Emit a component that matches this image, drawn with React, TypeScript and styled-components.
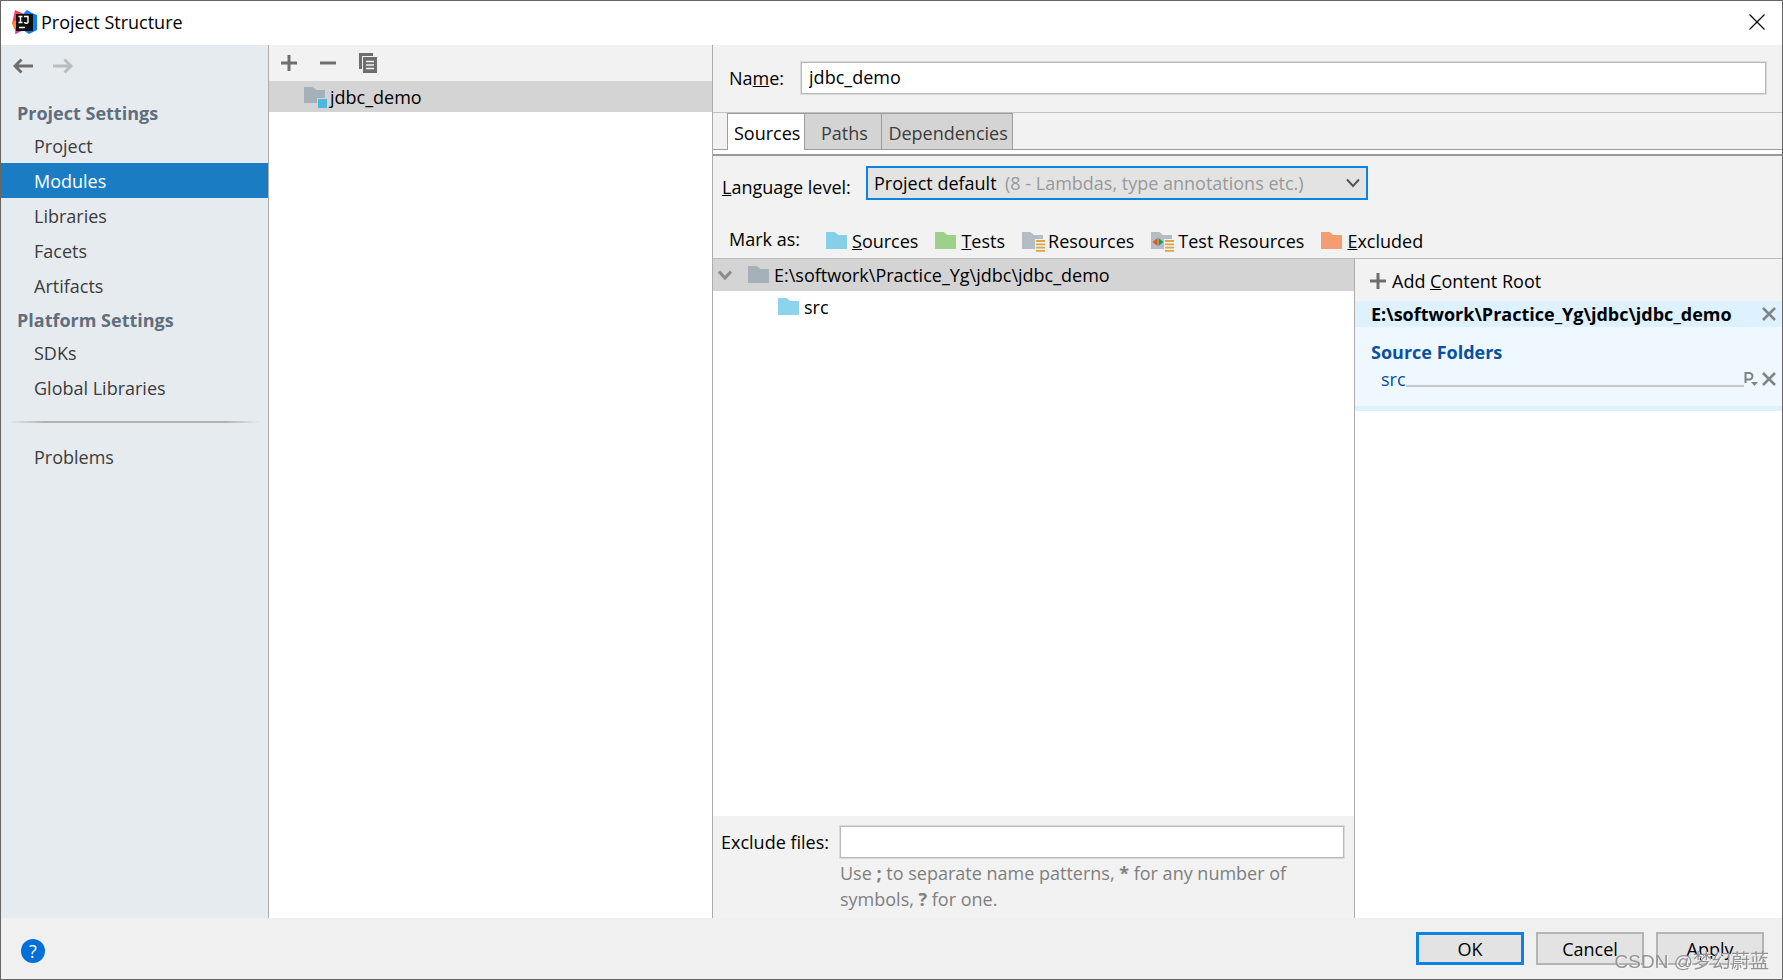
import React from "react";
import styled, { createGlobalStyle, css } from "styled-components";

const font = `"Open Sans", "Noto Sans", "Noto Sans CJK SC", sans-serif`;

const GlobalStyle = createGlobalStyle`
  *, *::before, *::after { box-sizing: border-box; }
  body { margin: 0; background: #f0f0f0; color: #000; font: 18px/26px ${font}; }
  button, input, select { font: inherit; color: inherit; }
  svg { display: block; flex: none; }
`;

const Window = styled.div`
  display: flex;
  flex-direction: column;
  min-height: 100vh;
  border: 1px solid #666;
  background: #f2f2f2;
`;

const TitleBar = styled.header`
  display: flex;
  align-items: center;
  gap: 4px;
  height: 44px;
  padding: 0 17px 2px 11px;
  background: #fff;
`;

const Title = styled.h1`
  flex: 1;
  margin: 0;
  font-size: 18px;
  font-weight: 400;
`;

const IconButton = styled.button`
  display: flex;
  align-items: center;
  justify-content: center;
  padding: 0;
  border: 0;
  background: none;
`;

const Body = styled.div`
  flex: 1;
  display: grid;
  grid-template-columns: 268px 444px minmax(0, 1fr);
`;

const Sidebar = styled.nav`
  background: #e6ebef;
  border-right: 1px solid #acacac;
`;

const History = styled.div`
  display: flex;
  gap: 20px;
  height: 51px;
  padding: 10px 12px 0;
  align-items: flex-start;
`;

const GroupTitle = styled.h2`
  margin: 0;
  padding: 2px 16px 0;
  color: #606e7d;
  font-size: 18px;
  font-weight: 700;
  line-height: 30px;
`;

const NavLink = styled.a<{ $active?: boolean }>`
  display: block;
  padding: 2px 33px 0;
  line-height: 33px;
  text-decoration: none;
  color: ${(p) => (p.$active ? "#fff" : "#3c3c3c")};
  background: ${(p) => (p.$active ? "#1a7dc4" : "transparent")};
`;

const Separator = styled.hr`
  height: 2px;
  margin: 16px 8px;
  border: 0;
  background: linear-gradient(to right, transparent, #b2b2b2 14%, #b2b2b2 86%, transparent);
`;

const ModuleList = styled.section`
  background: #fff;
  border-right: 1px solid #acacac;
`;

const Toolbar = styled.div`
  display: flex;
  align-items: center;
  gap: 23px;
  height: 36px;
  padding: 0 12px;
  background: #f2f2f2;
`;

const ModuleItem = styled.div`
  display: flex;
  align-items: center;
  gap: 3px;
  height: 31px;
  padding: 0 35px;
  background: #d4d4d4;
`;

const Editor = styled.main`
  display: flex;
  flex-direction: column;
  min-width: 0;
`;

const NameRow = styled.div`
  display: flex;
  align-items: center;
  gap: 17px;
  height: 67px;
  padding: 0 16px 2px;
`;

const TextInput = styled.input`
  flex: 1;
  min-width: 0;
  height: 32px;
  padding: 0 7px 2px;
  border: 1px solid #bababa;
  box-shadow: 0 0 0 1px #dadada;
  background: #fff;
  outline: 0;
`;

const TabBar = styled.div`
  display: flex;
  height: 38px;
  padding-left: 14px;
  border-top: 1px solid #c2c2c2;
  box-shadow: inset 0 -1px #9c9c9c;
`;

const Tab = styled.button<{ $active?: boolean }>`
  padding: 2px 4px 0 6px;
  min-width: 77px;
  border: solid #9c9c9c;
  border-width: 1px 1px 1px 0;
  background: #d4d4d4;
  color: #3c3c3c;
  ${(p) =>
    p.$active &&
    css`
      border-width: 1px 1px 0 1px;
      background: #fff;
      color: #000;
    `}
`;

const TabEdge = styled.div`
  height: 6px;
  border-bottom: 2px solid #999;
  background: #fff;
`;

const LanguageRow = styled.div`
  display: grid;
  grid-template-columns: 144px minmax(0, 502px);
  align-items: center;
  padding: 10px 9px 0;
`;

const LanguageLabel = styled.label`
  padding-top: 8px;
`;

const SelectBox = styled.div`
  display: grid;
  grid-template: 34px / minmax(0, 1fr);
  & > * { grid-area: 1 / 1; }
`;

const Select = styled.select`
  appearance: none;
  padding: 0 6px;
  border: 2px solid #0a84e0;
  border-radius: 0;
  background: #e3e3e3;
  outline: 0;
`;

const SelectHint = styled.div`
  display: flex;
  align-items: center;
  justify-content: space-between;
  padding: 0 8px 0 139px;
  color: #999;
  pointer-events: none;
`;

const MarkRow = styled.div`
  display: flex;
  align-items: center;
  height: 59px;
  padding: 23px 16px 0;
  border-bottom: 1px solid #bcbcbc;
`;

const MarkLabel = styled.span`
  width: 97px;
  padding-bottom: 4px;
`;

const MarkButton = styled.button<{ $gap?: number }>`
  display: flex;
  align-items: center;
  gap: ${(p) => p.$gap ?? 5}px;
  margin-right: 17px;
  padding: 0;
  border: 0;
  background: none;
`;

const Content = styled.div`
  flex: 1;
  display: grid;
  grid-template-columns: minmax(0, 642fr) minmax(0, 427fr);
`;

const TreePanel = styled.section`
  display: flex;
  flex-direction: column;
  border-right: 1px solid #acacac;
`;

const Tree = styled.div`
  flex: 1;
  background: #fff;
`;

const TreeRow = styled.div<{ $selected?: boolean; $indent: number }>`
  display: flex;
  align-items: center;
  gap: 5px;
  height: 32px;
  padding-left: ${(p) => p.$indent}px;
  background: ${(p) => (p.$selected ? "#d4d4d4" : "transparent")};
`;

const Expander = styled(IconButton)`
  width: 14px;
  margin-right: 11px;
`;

const ExcludeForm = styled.div`
  display: grid;
  grid-template-columns: auto minmax(0, 1fr);
  column-gap: 11px;
  height: 102px;
  padding: 10px 10px 0 8px;
  align-content: start;
  align-items: center;
`;

const ExcludeHint = styled.p`
  grid-column: 2;
  margin: 2px 0 0;
  padding-right: 40px;
  color: #808080;
`;

const RootsPanel = styled.section`
  background: #fff;
`;

const AddRoot = styled.button`
  display: flex;
  align-items: center;
  gap: 6px;
  width: 100%;
  height: 42px;
  padding: 2px 15px 0;
  border: 0;
  background: #f2f2f2;
`;

const RootCard = styled.article`
  height: 110px;
  background: #eff8ff;
  border-bottom: 5px solid #ddf1ff;
`;

const RootHeader = styled.header`
  display: flex;
  align-items: center;
  justify-content: space-between;
  height: 26px;
  padding: 0 6px 0 16px;
  background: #ddf1ff;
  font-weight: 700;
`;

const FolderTitle = styled.h3`
  margin: 0;
  padding: 12px 16px 0;
  color: #0a50a1;
  font-size: 18px;
  line-height: 26px;
`;

const FolderRow = styled.div`
  display: flex;
  align-items: center;
  height: 28px;
  padding: 0 6px 0 26px;
`;

const PrefixButton = styled(IconButton)`
  margin-right: 4px;
`;

const FolderLink = styled.a`
  flex: 1;
  display: flex;
  align-items: center;
  color: #0a50a1;
  text-decoration: none;
  &::after {
    content: "";
    flex: 1;
    height: 2px;
    margin-top: 14px;
    background: #c6c8ca;
  }
`;

const Footer = styled.footer`
  display: flex;
  align-items: center;
  gap: 12px;
  height: 61px;
  padding: 0 18px 0 20px;
  background: #f0f0f0;
`;

const HelpButton = styled.button`
  width: 24px;
  height: 24px;
  margin: 4px auto 0 0;
  padding: 0;
  border: 0;
  border-radius: 50%;
  background: #0070d8;
  color: #fff;
  line-height: 24px;
`;

const DialogButton = styled.button<{ $primary?: boolean }>`
  width: 108px;
  height: 33px;
  padding: 0;
  border: ${(p) => (p.$primary ? "3px solid #0a84e0" : "2px solid #b4b4b4")};
  background: #e3e3e3;
  line-height: 26px;
`;

const Watermark = styled.div`
  position: fixed;
  right: 14px;
  bottom: 5px;
  color: #949494;
  font: 19px/26px "Liberation Sans", "Noto Sans CJK SC", sans-serif;
  text-shadow: 1px 1px #f4f4f4;
  pointer-events: none;
`;

const PlusIcon = () => (
  <svg width="16" height="16" viewBox="0 0 16 16" aria-hidden="true">
    <path d="M8 0v16M0 8h16" stroke="#6e6e6e" strokeWidth="3" />
  </svg>
);

const MinusIcon = () => (
  <svg width="16" height="16" viewBox="0 0 16 16" aria-hidden="true">
    <path d="M0 8h16" stroke="#6e6e6e" strokeWidth="3" />
  </svg>
);

const CopyIcon = () => (
  <svg width="18" height="20" viewBox="0 0 18 20" aria-hidden="true">
    <path d="M0 0h14v3H3v13H0z" fill="#6e6e6e" />
    <path d="M4 4h14v16H4z" fill="#6e6e6e" />
    <path d="M7 8.500h8M7 12h8M7 15.500h8" stroke="#f2f2f2" strokeWidth="1.500" />
  </svg>
);

const ArrowIcon = ({ forward = false }: { forward?: boolean }) => (
  <svg width="20" height="22" viewBox="0 0 20 22" aria-hidden="true">
    <path
      d={forward ? "M0 11h18M11.500 4.500L18 11l-6.500 6.500" : "M20 11H2M8.500 4.500L2 11l6.500 6.500"}
      fill="none"
      stroke={forward ? "#bcbcbc" : "#6e6e6e"}
      strokeWidth="3"
    />
  </svg>
);

const ChevronIcon = ({ color, width = 2 }: { color: string; width?: number }) => (
  <svg width="14" height="10" viewBox="0 0 14 10" aria-hidden="true">
    <path d="M1 1.500l6 6.500 6-6.500" fill="none" stroke={color} strokeWidth={width} />
  </svg>
);

const CrossIcon = () => (
  <svg width="14" height="14" viewBox="0 0 14 14" aria-hidden="true">
    <path d="M1 1l12 12M13 1L1 13" stroke="#7f8488" strokeWidth="2.500" />
  </svg>
);

const CloseIcon = () => (
  <svg width="16" height="16" viewBox="0 0 16 16" aria-hidden="true">
    <path d="M.5.5l15 15M15.500.5l-15 15" stroke="#000" strokeWidth="1.200" />
  </svg>
);

type FolderKind = "plain" | "module" | "resources" | "testResources";

const FolderIcon = ({ color, kind = "plain" }: { color: string; kind?: FolderKind }) => {
  const resources = kind === "resources" || kind === "testResources";
  const width = kind === "plain" ? 21 : 23;
  return (
    <svg width={width} height="22" viewBox={`0 0 ${width} 22`} aria-hidden="true">
      <path
        d={
          resources
            ? "M0 2h8.500l3.500 3h9v4h-8v10H0z"
            : kind === "module"
              ? "M0 1h8.500l4 3H21v8h-8v5H0z"
              : "M0 2h8.500l4 3H21v14H0z"
        }
        fill={color}
      />
      {kind === "module" && <path d="M14 13h9v9h-9z" fill="#4eb7de" />}
      {resources && (
        <path d="M14 11h9M14 14.300h9M14 17.600h9M14 20.900h9" stroke="#dca548" strokeWidth="1.800" />
      )}
      {kind === "testResources" && (
        <>
          <path d="M6.500 8v8L1.500 12z" fill="#f0501e" />
          <path d="M7.500 8v8L12.500 12z" fill="#2a9a50" />
        </>
      )}
    </svg>
  );
};

const PackagePrefixIcon = () => (
  <svg width="14" height="20" viewBox="0 0 14 20" aria-hidden="true">
    <path d="M1.500 14V4h3.800a2.800 2.800 0 0 1 0 6.400H1.500" fill="none" stroke="#7f8488" strokeWidth="2" />
    <path d="M7 13h7l-3.500 4z" fill="#7f8488" />
  </svg>
);

const AppLogo = () => (
  <svg width="25" height="25" viewBox="0 0 25 25" aria-hidden="true">
    <path d="M3 0l9 4v16L3 24l1-7-4-3 1-5z" fill="#fb3f62" />
    <path d="M0 12l6-2v8l-4 1z" fill="#fc8b25" />
    <path d="M15 0l5 3 5 2v15l-8 4-6-4V4z" fill="#087cfa" />
    <path d="M3 18h9l-8 6z" fill="#ee2fa5" />
    <path d="M4 4h17v17H4z" fill="#111" />
    <path
      d="M6.500 6.500h4M8.500 6.500v6M6.500 12.500h4M12 6.500h4v4.500a1.600 1.600 0 0 1-3.500 1M7 17.500h6"
      fill="none"
      stroke="#fff"
      strokeWidth="1.400"
    />
  </svg>
);

export default function App() {
  return (
    <>
      <GlobalStyle />
      <Window>
        <TitleBar>
          <AppLogo />
          <Title>Project Structure</Title>
          <IconButton aria-label="Close">
            <CloseIcon />
          </IconButton>
        </TitleBar>

        <Body>
          <Sidebar>
            <History>
              <IconButton aria-label="Back">
                <ArrowIcon />
              </IconButton>
              <IconButton aria-label="Forward" disabled>
                <ArrowIcon forward />
              </IconButton>
            </History>
            <GroupTitle>Project Settings</GroupTitle>
            <NavLink href="#project">Project</NavLink>
            <NavLink href="#modules" $active aria-current="page">Modules</NavLink>
            <NavLink href="#libraries">Libraries</NavLink>
            <NavLink href="#facets">Facets</NavLink>
            <NavLink href="#artifacts">Artifacts</NavLink>
            <GroupTitle>Platform Settings</GroupTitle>
            <NavLink href="#sdks">SDKs</NavLink>
            <NavLink href="#global-libraries">Global Libraries</NavLink>
            <Separator />
            <NavLink href="#problems">Problems</NavLink>
          </Sidebar>

          <ModuleList>
            <Toolbar>
              <IconButton aria-label="Add module">
                <PlusIcon />
              </IconButton>
              <IconButton aria-label="Remove module">
                <MinusIcon />
              </IconButton>
              <IconButton aria-label="Copy module">
                <CopyIcon />
              </IconButton>
            </Toolbar>
            <ModuleItem>
              <FolderIcon color="#a5b1b9" kind="module" />
              jdbc_demo
            </ModuleItem>
          </ModuleList>

          <Editor>
            <NameRow>
              <label htmlFor="module-name">
                Na<u>m</u>e:
              </label>
              <TextInput id="module-name" defaultValue="jdbc_demo" />
            </NameRow>
            <TabBar role="tablist">
              <Tab role="tab" aria-selected="true" $active>Sources</Tab>
              <Tab role="tab" aria-selected="false">Paths</Tab>
              <Tab role="tab" aria-selected="false">Dependencies</Tab>
            </TabBar>
            <TabEdge />

            <LanguageRow>
              <LanguageLabel htmlFor="language-level">
                <u>L</u>anguage level:
              </LanguageLabel>
              <SelectBox>
                <Select id="language-level">
                  <option>Project default</option>
                </Select>
                <SelectHint>
                  (8 - Lambdas, type annotations etc.)
                  <ChevronIcon color="#555" />
                </SelectHint>
              </SelectBox>
            </LanguageRow>

            <MarkRow>
              <MarkLabel>Mark as:</MarkLabel>
              <MarkButton>
                <FolderIcon color="#87cfe8" />
                <span><u>S</u>ources</span>
              </MarkButton>
              <MarkButton>
                <FolderIcon color="#9dd088" />
                <span><u>T</u>ests</span>
              </MarkButton>
              <MarkButton $gap={3}>
                <FolderIcon color="#b4bdc6" kind="resources" />
                <span>Resources</span>
              </MarkButton>
              <MarkButton $gap={4}>
                <FolderIcon color="#b4bdc6" kind="testResources" />
                <span>Test Resources</span>
              </MarkButton>
              <MarkButton>
                <FolderIcon color="#f29d72" />
                <span><u>E</u>xcluded</span>
              </MarkButton>
            </MarkRow>

            <Content>
              <TreePanel>
                <Tree>
                  <TreeRow $selected $indent={5}>
                    <Expander aria-label="Collapse">
                      <ChevronIcon color="#8a8a8a" width={3} />
                    </Expander>
                    <FolderIcon color="#a5b1b9" />
                    E:\softwork\Practice_Yg\jdbc\jdbc_demo
                  </TreeRow>
                  <TreeRow $indent={65}>
                    <FolderIcon color="#8cd3ec" />
                    src
                  </TreeRow>
                </Tree>
                <ExcludeForm>
                  <label htmlFor="exclude-files">Exclude files:</label>
                  <TextInput id="exclude-files" />
                  <ExcludeHint>
                    Use <b>;</b> to separate name patterns, <b>*</b> for any number of symbols, <b>?</b> for one.
                  </ExcludeHint>
                </ExcludeForm>
              </TreePanel>

              <RootsPanel>
                <AddRoot>
                  <PlusIcon />
                  <span>Add <u>C</u>ontent Root</span>
                </AddRoot>
                <RootCard>
                  <RootHeader>
                    E:\softwork\Practice_Yg\jdbc\jdbc_demo
                    <IconButton aria-label="Remove content root">
                      <CrossIcon />
                    </IconButton>
                  </RootHeader>
                  <FolderTitle>Source Folders</FolderTitle>
                  <FolderRow>
                    <FolderLink href="#src">src</FolderLink>
                    <PrefixButton aria-label="Edit package prefix">
                      <PackagePrefixIcon />
                    </PrefixButton>
                    <IconButton aria-label="Remove source folder">
                      <CrossIcon />
                    </IconButton>
                  </FolderRow>
                </RootCard>
              </RootsPanel>
            </Content>
          </Editor>
        </Body>

        <Footer>
          <HelpButton aria-label="Help">?</HelpButton>
          <DialogButton $primary>OK</DialogButton>
          <DialogButton>Cancel</DialogButton>
          <DialogButton>Apply</DialogButton>
        </Footer>
      </Window>
      <Watermark>CSDN @梦幻蔚蓝</Watermark>
    </>
  );
}
